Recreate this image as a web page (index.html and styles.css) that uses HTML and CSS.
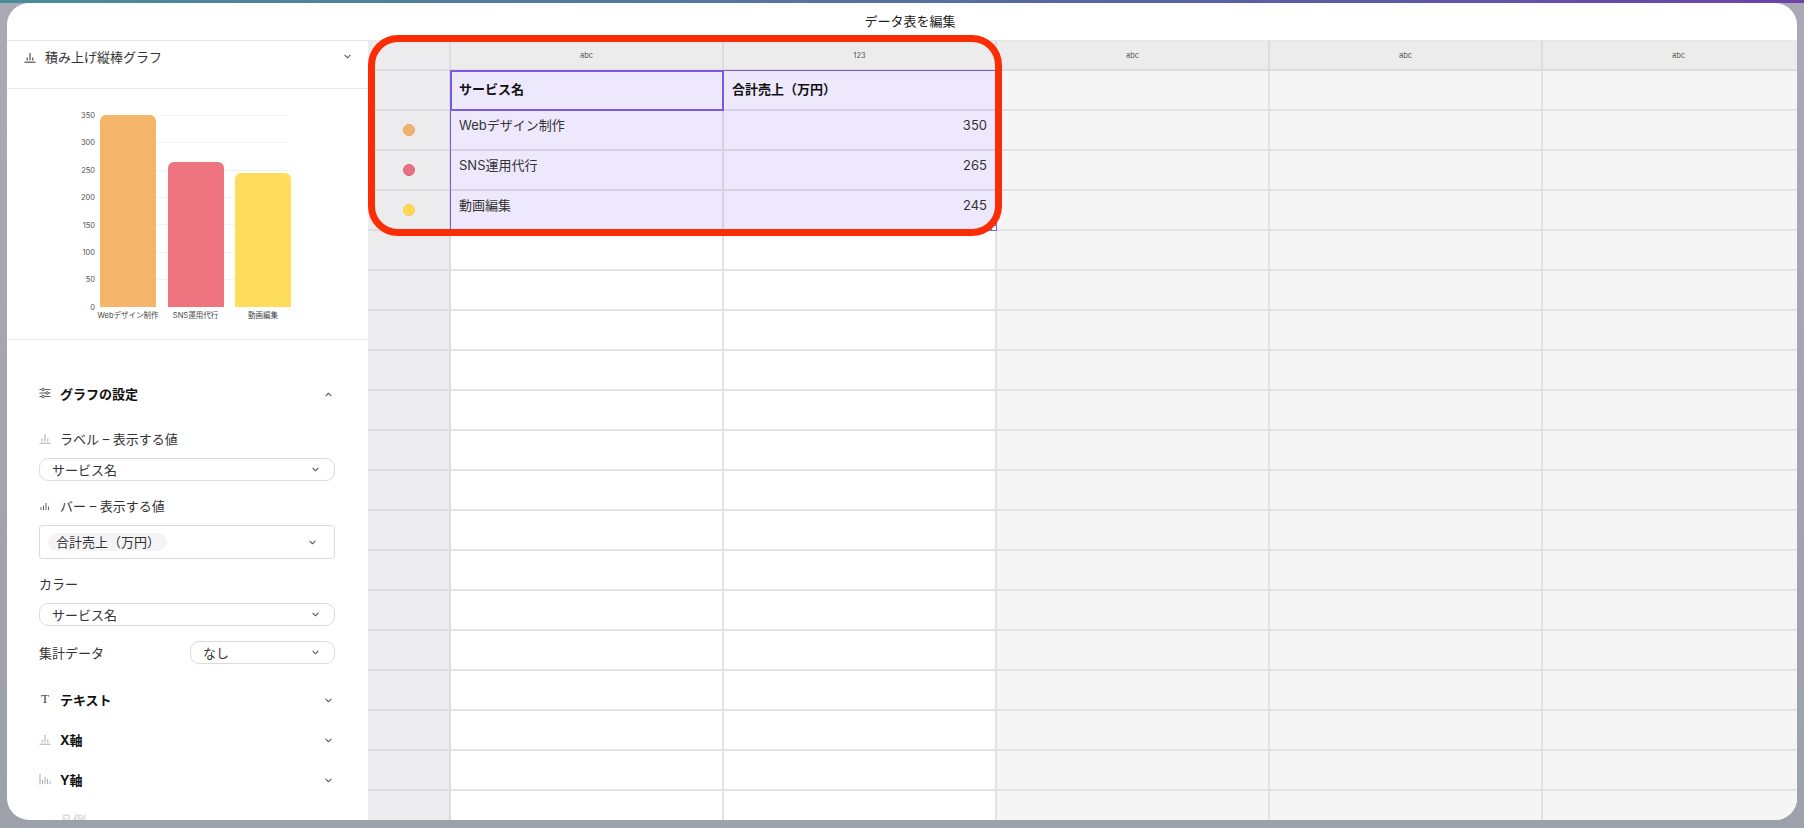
FILE: index.html
```html
<!DOCTYPE html>
<html lang="ja">
<head>
<meta charset="utf-8">
<title>データ表を編集</title>
<link rel="stylesheet" href="styles.css">
</head>
<body>
<svg class="defs" width="0" height="0" aria-hidden="true">
  <symbol id="chev" viewBox="0 0 8 5"><path d="M1 1l3 3 3-3" fill="none" stroke="currentColor" stroke-width="1.2" stroke-linecap="round" stroke-linejoin="round"/></symbol>
  <symbol id="bars" viewBox="0 0 12 12"><path d="M.5 11.200h11M3.200 9.500V6.500M6 9.500V2M8.800 9.500V6.500" fill="none" stroke="currentColor" stroke-width="1"/></symbol>
  <symbol id="barsmall" viewBox="0 0 12 12"><path d="M2 11V8M4.500 11V6.500M7 11V4M9.500 11V7.500" fill="none" stroke="currentColor" stroke-width="1"/></symbol>
  <symbol id="barsleft" viewBox="0 0 12 12"><path d="M1 1v10.500M3.500 11V7M6 11V4M8.500 11V6M11 11V8" fill="none" stroke="currentColor" stroke-width="1"/></symbol>
</svg>
<div class="modal">
  <header class="title">データ表を編集</header>
  <div class="main">
    <aside class="side">
      <div class="type-row">
        <svg class="ico-dark"><use href="#bars"/></svg>
        <span class="type-name">積み上げ縦棒グラフ</span>
        <svg class="chev"><use href="#chev"/></svg>
      </div>
      <div class="chart-box">
        <svg class="chart" viewBox="7 89 361 250" width="361" height="250">
          <g class="grid-lines">
            <path d="M100 115.500H288M100 142.500H288M100 170.500H288M100 197.500H288M100 224.500H288M100 252.500H288M100 279.500H288"/>
          </g>
          <path class="bar-a" d="M100 307V121a6 6 0 0 1 6-6h44a6 6 0 0 1 6 6V307z"/>
          <path class="bar-b" d="M168 307V168a6 6 0 0 1 6-6h44a6 6 0 0 1 6 6V307z"/>
          <path class="bar-c" d="M235 307V179a6 6 0 0 1 6-6h44a6 6 0 0 1 6 6V307z"/>
          <g class="y-labels">
            <text x="95" y="118">350</text>
            <text x="95" y="145">300</text>
            <text x="95" y="173">250</text>
            <text x="95" y="200">200</text>
            <text x="95" y="228">150</text>
            <text x="95" y="255">100</text>
            <text x="95" y="282">50</text>
            <text x="95" y="310">0</text>
          </g>
          <g class="x-labels">
            <text x="128" y="318">Webデザイン制作</text>
            <text x="195.500" y="318">SNS運用代行</text>
            <text x="263" y="318">動画編集</text>
          </g>
        </svg>
      </div>
      <div class="settings">
        <div class="acc acc-first">
          <svg class="ico-dark ico-acc" viewBox="0 0 12 12"><path d="M.5 2.500h11M.5 6h11M.5 9.500h11" fill="none" stroke="currentColor" stroke-width=".8"/><circle cx="4" cy="2.500" r="1.300" fill="#fff" stroke="currentColor" stroke-width=".8"/><circle cx="8" cy="6" r="1.300" fill="#fff" stroke="currentColor" stroke-width=".8"/><circle cx="4" cy="9.500" r="1.300" fill="#fff" stroke="currentColor" stroke-width=".8"/></svg>
          <span class="acc-name">グラフの設定</span>
          <svg class="chev chev-up"><use href="#chev"/></svg>
        </div>
        <div class="field-label field-first">
          <svg class="ico-light ico-acc"><use href="#bars"/></svg>
          <span>ラベル – 表示する値</span>
        </div>
        <div class="select">
          <span>サービス名</span>
          <svg class="chev"><use href="#chev"/></svg>
        </div>
        <div class="field-label">
          <svg class="ico-mid ico-acc"><use href="#barsmall"/></svg>
          <span>バー – 表示する値</span>
        </div>
        <div class="multi">
          <span class="chip">合計売上（万円）</span>
          <svg class="chev"><use href="#chev"/></svg>
        </div>
        <div class="field-label"><span>カラー</span></div>
        <div class="select">
          <span>サービス名</span>
          <svg class="chev"><use href="#chev"/></svg>
        </div>
        <div class="agg">
          <span>集計データ</span>
          <div class="select select-small">
            <span>なし</span>
            <svg class="chev"><use href="#chev"/></svg>
          </div>
        </div>
        <div class="acc acc-text">
          <span class="ico-t">T</span>
          <span class="acc-name">テキスト</span>
          <svg class="chev chev-low"><use href="#chev"/></svg>
        </div>
        <div class="acc">
          <svg class="ico-light ico-acc"><use href="#bars"/></svg>
          <span class="acc-name">X軸</span>
          <svg class="chev chev-low"><use href="#chev"/></svg>
        </div>
        <div class="acc">
          <svg class="ico-light ico-acc"><use href="#barsleft"/></svg>
          <span class="acc-name">Y軸</span>
          <svg class="chev chev-low"><use href="#chev"/></svg>
        </div>
        <div class="acc acc-faded">
          <span class="ico-acc"></span>
          <span class="acc-name">凡例</span>
        </div>
      </div>
    </aside>
    <section class="sheet">
      <div class="row row-types">
        <div class="cell gutter"></div>
        <div class="cell type">abc</div>
        <div class="cell type">123</div>
        <div class="cell type">abc</div>
        <div class="cell type">abc</div>
        <div class="cell type">abc</div>
      </div>
      <div class="row">
        <div class="cell gutter"></div>
        <div class="cell sel head">サービス名</div>
        <div class="cell sel head">合計売上（万円）</div>
        <div class="cell off"></div><div class="cell off"></div><div class="cell off"></div>
      </div>
      <div class="row">
        <div class="cell gutter"><span class="dot dot-a"></span></div>
        <div class="cell sel">Webデザイン制作</div>
        <div class="cell sel num">350</div>
        <div class="cell off"></div><div class="cell off"></div><div class="cell off"></div>
      </div>
      <div class="row">
        <div class="cell gutter"><span class="dot dot-b"></span></div>
        <div class="cell sel">SNS運用代行</div>
        <div class="cell sel num">265</div>
        <div class="cell off"></div><div class="cell off"></div><div class="cell off"></div>
      </div>
      <div class="row">
        <div class="cell gutter"><span class="dot dot-c"></span></div>
        <div class="cell sel">動画編集</div>
        <div class="cell sel num">245</div>
        <div class="cell off"></div><div class="cell off"></div><div class="cell off"></div>
      </div>
      <div class="row"><div class="cell gutter"></div><div class="cell"></div><div class="cell"></div><div class="cell off"></div><div class="cell off"></div><div class="cell off"></div></div>
      <div class="row"><div class="cell gutter"></div><div class="cell"></div><div class="cell"></div><div class="cell off"></div><div class="cell off"></div><div class="cell off"></div></div>
      <div class="row"><div class="cell gutter"></div><div class="cell"></div><div class="cell"></div><div class="cell off"></div><div class="cell off"></div><div class="cell off"></div></div>
      <div class="row"><div class="cell gutter"></div><div class="cell"></div><div class="cell"></div><div class="cell off"></div><div class="cell off"></div><div class="cell off"></div></div>
      <div class="row"><div class="cell gutter"></div><div class="cell"></div><div class="cell"></div><div class="cell off"></div><div class="cell off"></div><div class="cell off"></div></div>
      <div class="row"><div class="cell gutter"></div><div class="cell"></div><div class="cell"></div><div class="cell off"></div><div class="cell off"></div><div class="cell off"></div></div>
      <div class="row"><div class="cell gutter"></div><div class="cell"></div><div class="cell"></div><div class="cell off"></div><div class="cell off"></div><div class="cell off"></div></div>
      <div class="row"><div class="cell gutter"></div><div class="cell"></div><div class="cell"></div><div class="cell off"></div><div class="cell off"></div><div class="cell off"></div></div>
      <div class="row"><div class="cell gutter"></div><div class="cell"></div><div class="cell"></div><div class="cell off"></div><div class="cell off"></div><div class="cell off"></div></div>
      <div class="row"><div class="cell gutter"></div><div class="cell"></div><div class="cell"></div><div class="cell off"></div><div class="cell off"></div><div class="cell off"></div></div>
      <div class="row"><div class="cell gutter"></div><div class="cell"></div><div class="cell"></div><div class="cell off"></div><div class="cell off"></div><div class="cell off"></div></div>
      <div class="row"><div class="cell gutter"></div><div class="cell"></div><div class="cell"></div><div class="cell off"></div><div class="cell off"></div><div class="cell off"></div></div>
      <div class="row"><div class="cell gutter"></div><div class="cell"></div><div class="cell"></div><div class="cell off"></div><div class="cell off"></div><div class="cell off"></div></div>
      <div class="row"><div class="cell gutter"></div><div class="cell"></div><div class="cell"></div><div class="cell off"></div><div class="cell off"></div><div class="cell off"></div></div>
      <div class="row"><div class="cell gutter"></div><div class="cell"></div><div class="cell"></div><div class="cell off"></div><div class="cell off"></div><div class="cell off"></div></div>
      <div class="range"><span class="handle"></span></div>
      <div class="active"></div>
    </section>
  </div>
  <div class="callout"></div>
</div>
</body>
</html>
```

FILE: styles.css
```css
* { box-sizing: border-box; }
html, body { height: 100%; }
body {
  margin: 0;
  height: 828px;
  padding: 3px 7px 8px;
  overflow: hidden;
  background:
    linear-gradient(to right, #4c8c9a 0%, #55739f 45%, #5b5fa5 70%, #6b44a6 100%) 0 0 / 100% 3px no-repeat,
    linear-gradient(to bottom, #a9aab6, #9da1aa);
  font-family: "Inter", "Noto Sans CJK JP", sans-serif;
  font-size: 13px;
  color: #333;
}
.defs { position: absolute; }
.modal {
  position: relative;
  height: 817px;
  background: #fff;
  border-radius: 22px;
  overflow: hidden;
  display: flex;
  flex-direction: column;
}
.title {
  flex: none;
  height: 38px;
  border-bottom: 1px solid #e6e6e8;
  display: flex;
  align-items: center;
  justify-content: center;
  padding: 0 0 2px 16px;
  color: #222;
}
.main { flex: 1; min-height: 0; display: flex; }

/* sidebar */
.side { flex: none; width: 361px; overflow: hidden; }
.type-row {
  height: 48px;
  padding: 0 17px 16px 17px;
  border-bottom: 1px solid #e8e8ea;
  display: flex;
  align-items: center;
}
.ico-dark { width: 12px; height: 12px; color: #333; flex: none; }
.ico-mid { color: #666; }
.ico-light { color: #aaa; }
.ico-acc { width: 12px; height: 12px; flex: none; margin-right: 9px; }
.type-row .ico-dark { margin-right: 9px; }
.type-name { flex: 1; }
.chev { width: 7px; height: 5px; flex: none; color: #555; }
.chev-up { transform: rotate(180deg); }
.chev-low { margin-top: 2px; }
.chart-box { height: 251px; border-bottom: 1px solid #eeeeef; }
.chart { display: block; }
.grid-lines path { stroke: #f3f3f3; stroke-width: 1; fill: none; }
.bar-a { fill: #f5b56b; }
.bar-b { fill: #ee7580; }
.bar-c { fill: #ffdd5c; }
.y-labels text { font-size: 7.5px; fill: #555; text-anchor: end; }
.x-labels text { font-size: 7.5px; fill: #444; text-anchor: middle; }

.settings { padding: 0 33px 0 32px; }
.acc { height: 20px; margin-top: 20px; display: flex; align-items: center; color: #111; padding-right: 3px; }
.acc-first { margin-top: 44px; padding-bottom: 2px; }
.acc-first .chev { margin-top: 2px; }
.acc-text { margin-top: 25px; }
.acc-name { flex: 1; font-weight: 700; }
.acc-faded { opacity: .15; }
.ico-t {
  width: 12px;
  margin-right: 9px;
  font-family: "Liberation Serif", serif;
  font-size: 13px;
  color: #444;
  text-align: center;
}
.field-label { height: 20px; margin-top: 15px; padding-bottom: 2px; display: flex; align-items: center; }
.field-first { margin-top: 25px; }
.select {
  height: 23px;
  margin-top: 9px;
  padding: 0 15px 0 12px;
  border: 1px solid #dcdce0;
  border-radius: 9px;
  display: flex;
  align-items: center;
  justify-content: space-between;
}
.multi {
  height: 34px;
  margin-top: 9px;
  padding: 0 18px 0 8px;
  border: 1px solid #dcdce0;
  border-radius: 3px;
  display: flex;
  align-items: center;
  justify-content: space-between;
}
.chip {
  height: 18px;
  line-height: 18px;
  padding: 0 0 0 8px;
  width: 119px;
  border-radius: 9px;
  background: #f4f4f6;
  white-space: nowrap;
}
.agg {
  height: 23px;
  margin-top: 15px;
  display: flex;
  align-items: center;
  justify-content: space-between;
}
.select-small { width: 145px; margin-top: 0; }

/* sheet */
.sheet { position: relative; flex: 1; min-width: 0; overflow: hidden; background: #fff; }
.row { display: grid; grid-template-columns: 83px repeat(5, 273px); height: 40px; }
.row-types { height: 30px; }
.cell {
  border-right: 2px solid #e2e2e5;
  border-bottom: 2px solid #e2e2e5;
  padding: 4px 8px 0;
  line-height: 20px;
  color: #333;
  white-space: nowrap;
}
.gutter {
  background: #ececee;
  border-color: #dcdcde;
  display: flex;
  justify-content: center;
  padding: 13px 0 0;
}
.type {
  background: #ececec;
  border-color: #dcdcde;
  padding: 2px 0 0;
  display: flex;
  align-items: center;
  justify-content: center;
  font-size: 7.5px;
  color: #555;
}
.off { background: #f5f5f6; }
.sel { background: #ede8fb; border-color: #d6d1e6; }
.head { font-weight: 700; color: #111; padding-top: 0; padding-bottom: 3px; display: flex; align-items: center; }
.num { text-align: right; }
.dot { width: 12px; height: 12px; border-radius: 50%; }
.dot-a { background: #f3b26c; border: 1px solid #e9a662; }
.dot-b { background: #e9707f; border: 1px solid #dc6575; }
.dot-c { background: #ffd84f; border: 1px solid #f2ce55; }
.range {
  position: absolute;
  left: 82px;
  top: 29px;
  width: 547px;
  height: 161px;
  border: 1px solid #7a5ae0;
}
.handle {
  position: absolute;
  right: -1px;
  bottom: -1px;
  width: 6px;
  height: 6px;
  border: 1px solid #7a5ae0;
  background: #fff;
}
.active {
  position: absolute;
  left: 82px;
  top: 29px;
  width: 274px;
  height: 41px;
  border: 2px solid #7a5ae0;
}
.callout {
  position: absolute;
  left: 361px;
  top: 32px;
  width: 634px;
  height: 201px;
  border: 7px solid #fb2d07;
  border-radius: 30px;
}
```
